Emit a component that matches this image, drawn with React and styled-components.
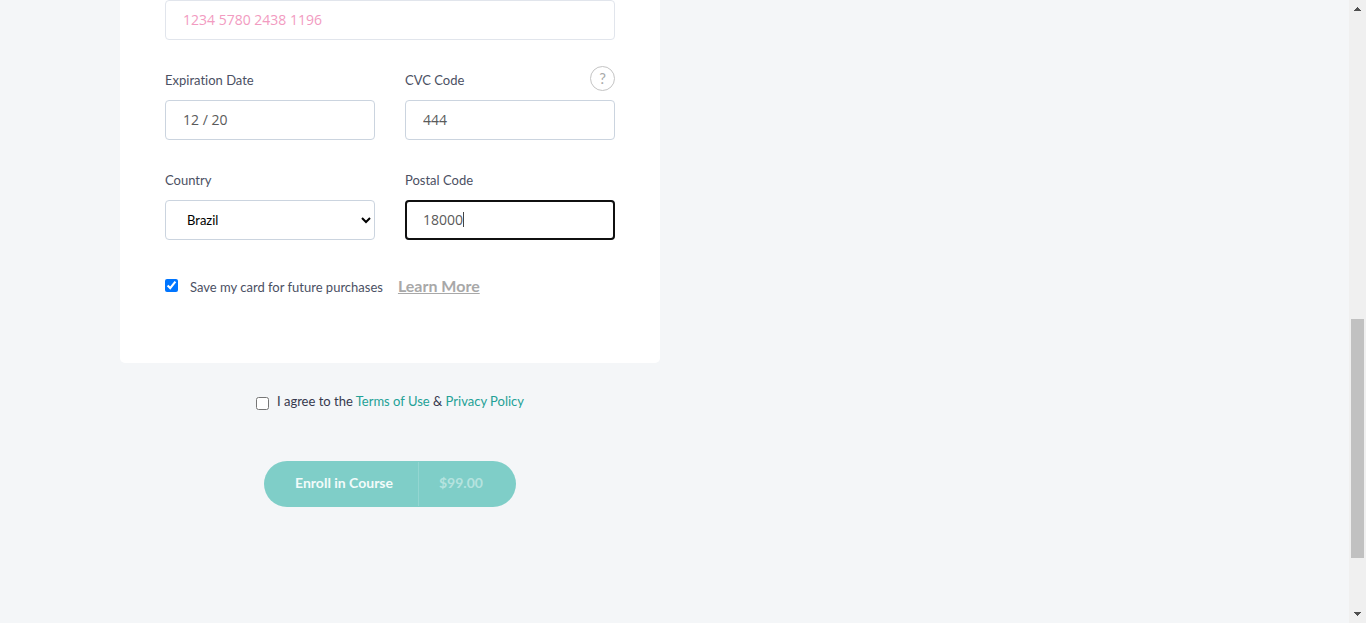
import React from 'react';
import styled, { createGlobalStyle } from 'styled-components';

const GlobalStyle = createGlobalStyle`
  *, *::before, *::after { box-sizing: border-box; }
  body {
    margin: 0;
    background: #f4f6f8;
    color: #36394d;
    font: 13px/20px Lato, "Open Sans", sans-serif;
    font-variant-ligatures: none;
  }
`;

const Page = styled.div`
  display: grid;
  grid-template-columns: minmax(0, 1fr) 17px;
  min-height: 100vh;
`;

const Container = styled.main`
  width: 100%;
  max-width: 1109px;
  margin: 0 auto;
`;

const Checkout = styled.form`
  display: flex;
  flex-direction: column;
  align-items: center;
  width: 100%;
  max-width: 540px;
`;

const Card = styled.section`
  width: 100%;
  padding: 0 45px 64px;
  background: #fff;
  border-radius: 0 0 5px 5px;
`;

const Fields = styled.div`
  display: grid;
  grid-template-columns: 1fr 1fr;
  column-gap: 30px;
  row-gap: 30px;
`;

const Field = styled.div`
  grid-column: ${(p) => (p.$wide ? '1 / -1' : 'auto')};
  min-width: 0;
`;

const FieldHead = styled.div`
  display: flex;
  align-items: flex-start;
  justify-content: space-between;
  height: 30px;
`;

const Label = styled.label`
  color: #4b5063;
`;

const InputBox = styled.div`
  position: relative;
`;

const Input = styled.input`
  display: block;
  width: 100%;
  height: 40px;
  padding: 0 17px 2px;
  border: 1px solid ${(p) => (p.$invalid ? '#e1e5ec' : '#cbd4df')};
  border-radius: 4px;
  background: #fff;
  color: ${(p) => (p.$invalid ? '#f29bc1' : '#5a5a5a')};
  caret-color: transparent;
  font: 14px "Open Sans", "Noto Sans", sans-serif;
  outline: ${(p) => (p.$active ? '2px solid #101010' : 'none')};
  outline-offset: -2px;
`;

const Caret = styled.span`
  position: absolute;
  top: 12px;
  left: 58px;
  width: 1px;
  height: 15px;
  background: #444;
`;

const Select = styled.select`
  display: block;
  width: 100%;
  height: 40px;
  padding: 0 1px 0 17px;
  border: 1px solid #cbd4df;
  border-radius: 4px;
  background: #fff;
  color: #000;
  font: inherit;
`;

const HelpButton = styled.button`
  width: 25px;
  height: 25px;
  margin-top: -4px;
  padding: 0;
  border: 1px solid #c4c4c4;
  border-radius: 50%;
  background: #fff;
  color: #aaa;
  font: 15px/23px Lato, sans-serif;
`;

const SaveRow = styled.div`
  display: flex;
  align-items: flex-start;
  margin-top: 35px;
  height: 24px;
`;

const Checkbox = styled.input`
  flex: none;
  width: 13px;
  height: 13px;
  margin: 4px 0 0;
`;

const SaveLabel = styled.label`
  margin: 2px 15px 0 12px;
  color: #4b5063;
`;

const LearnMore = styled.a`
  margin-top: 1px;
  color: #a8a8a8;
  font-size: 16px;
  font-weight: 700;
  text-decoration: underline;
`;

const Terms = styled.div`
  display: flex;
  align-items: flex-start;
  gap: 8px;
  margin-top: 28px;
  padding-top: 2px;
`;

const TermsLabel = styled.label`
  margin-top: -2px;
  color: #36394d;
`;

const TermsLink = styled.a`
  color: #23a196;
  text-decoration: none;
`;

const EnrollButton = styled.button`
  display: flex;
  align-items: flex-start;
  height: 46px;
  margin-top: 50px;
  padding: 1px 0;
  border: 0;
  border-radius: 23px;
  background: #7fcec8;
  color: #f2fbfa;
  font: 700 14px/42px Lato, sans-serif;
`;

const EnrollText = styled.span`
  padding: 0 25px 0 31px;
`;

const Price = styled.span`
  height: 44px;
  padding: 0 33px 0 20px;
  border-left: 1px solid #93d6d1;
  color: #b5e3df;
`;

const Scrollbar = styled.div`
  display: flex;
  flex-direction: column;
  align-items: center;
  background: #f0f0f0;
`;

const Arrow = styled.svg`
  flex: none;
  width: 17px;
  height: 17px;
  fill: #505050;
`;

const Space = styled.div`
  flex: ${(p) => p.$grow} 0 0;
`;

const Thumb = styled.div`
  flex: 239 0 0;
  width: 13px;
  background: #c1c1c1;
`;

function TextField({ id, label, value, help, active, invalid, wide }) {
  return (
    <Field $wide={wide}>
      {label && (
        <FieldHead>
          <Label htmlFor={id}>{label}</Label>
          {help && <HelpButton type="button" aria-label="About the CVC code">?</HelpButton>}
        </FieldHead>
      )}
      <InputBox>
        <Input
          id={id}
          type="text"
          defaultValue={value}
          aria-label={label ? undefined : 'Card number'}
          $active={active}
          $invalid={invalid}
        />
        {active && <Caret />}
      </InputBox>
    </Field>
  );
}

export default function App() {
  return (
    <>
      <GlobalStyle />
      <Page>
        <Container>
          <Checkout onSubmit={(e) => e.preventDefault()}>
            <Card>
              <Fields>
                <TextField id="card" value="1234 5780 2438 1196" invalid wide />
                <TextField id="expiry" label="Expiration Date" value="12 / 20" />
                <TextField id="cvc" label="CVC Code" value="444" help />
                <Field>
                  <FieldHead>
                    <Label htmlFor="country">Country</Label>
                  </FieldHead>
                  <Select id="country" defaultValue="Brazil">
                    <option>Brazil</option>
                  </Select>
                </Field>
                <TextField id="postal" label="Postal Code" value="18000" active />
              </Fields>
              <SaveRow>
                <Checkbox id="save" type="checkbox" defaultChecked />
                <SaveLabel htmlFor="save">Save my card for future purchases</SaveLabel>
                <LearnMore href="#learn">Learn More</LearnMore>
              </SaveRow>
            </Card>
            <Terms>
              <Checkbox id="agree" type="checkbox" />
              <TermsLabel htmlFor="agree">
                I agree to the <TermsLink href="#terms">Terms of Use</TermsLink> &amp;{' '}
                <TermsLink href="#privacy">Privacy Policy</TermsLink>
              </TermsLabel>
            </Terms>
            <EnrollButton type="submit">
              <EnrollText>Enroll in Course</EnrollText>
              <Price>$99.00</Price>
            </EnrollButton>
          </Checkout>
        </Container>
        <Scrollbar aria-hidden="true">
          <Arrow viewBox="0 0 17 17"><path d="M8 7h1v1h1v1h1v1h1v1H5v-1h1V9h1V8h1z" /></Arrow>
          <Space $grow={302} />
          <Thumb />
          <Space $grow={48} />
          <Arrow viewBox="0 0 17 17"><path d="M5 6h7v1h-1v1h-1v1H9v1H8V9H7V8H6V7H5z" /></Arrow>
        </Scrollbar>
      </Page>
    </>
  );
}
